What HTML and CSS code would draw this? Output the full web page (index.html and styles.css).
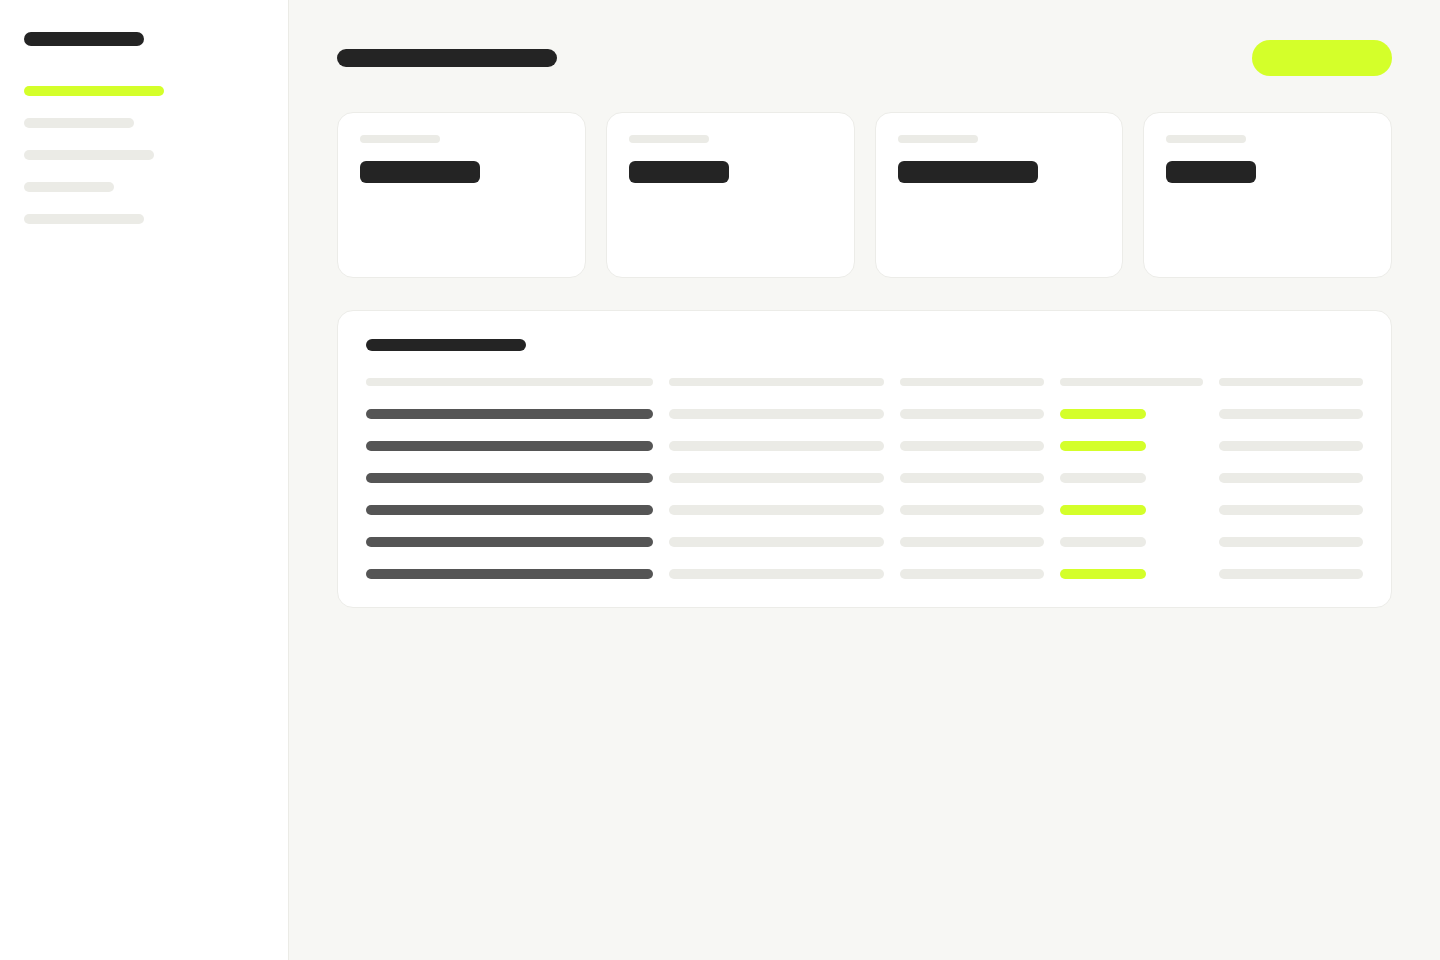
FILE: index.html
```html
<!DOCTYPE html>
<html lang="en">
<head>
<meta charset="utf-8">
<title>Dashboard</title>
<link rel="stylesheet" href="styles.css">
</head>
<body>
<div class="app">
  <aside class="sidebar">
    <div class="logo sk"></div>
    <nav class="nav">
      <div class="nav-item sk active" style="width:140px"></div>
      <div class="nav-item sk" style="width:110px"></div>
      <div class="nav-item sk" style="width:130px"></div>
      <div class="nav-item sk" style="width:90px"></div>
      <div class="nav-item sk" style="width:120px"></div>
    </nav>
  </aside>
  <main class="main">
    <header class="header">
      <div class="page-title sk"></div>
      <div class="btn"></div>
    </header>
    <section class="stats">
      <div class="card">
        <div class="card-label sk"></div>
        <div class="card-value" style="width:120px"></div>
      </div>
      <div class="card">
        <div class="card-label sk"></div>
        <div class="card-value" style="width:100px"></div>
      </div>
      <div class="card">
        <div class="card-label sk"></div>
        <div class="card-value" style="width:140px"></div>
      </div>
      <div class="card">
        <div class="card-label sk"></div>
        <div class="card-value" style="width:90px"></div>
      </div>
    </section>
    <section class="table-card">
      <div class="table-title sk"></div>
      <div class="table">
        <div class="row head">
          <div class="cell sk"></div><div class="cell sk"></div><div class="cell sk"></div><div class="cell sk"></div><div class="cell sk"></div>
        </div>
        <div class="row">
          <div class="cell sk strong"></div><div class="cell sk"></div><div class="cell sk"></div><div class="cell sk status on"></div><div class="cell sk"></div>
        </div>
        <div class="row">
          <div class="cell sk strong"></div><div class="cell sk"></div><div class="cell sk"></div><div class="cell sk status on"></div><div class="cell sk"></div>
        </div>
        <div class="row">
          <div class="cell sk strong"></div><div class="cell sk"></div><div class="cell sk"></div><div class="cell sk status"></div><div class="cell sk"></div>
        </div>
        <div class="row">
          <div class="cell sk strong"></div><div class="cell sk"></div><div class="cell sk"></div><div class="cell sk status on"></div><div class="cell sk"></div>
        </div>
        <div class="row">
          <div class="cell sk strong"></div><div class="cell sk"></div><div class="cell sk"></div><div class="cell sk status"></div><div class="cell sk"></div>
        </div>
        <div class="row">
          <div class="cell sk strong"></div><div class="cell sk"></div><div class="cell sk"></div><div class="cell sk status on"></div><div class="cell sk"></div>
        </div>
      </div>
    </section>
  </main>
</div>
</body>
</html>
```
FILE: styles.css
```css
* { box-sizing: border-box; }
html, body { margin: 0; padding: 0; height: 100%; }
body {
  font-family: "Inter", "Liberation Sans", sans-serif;
  background: #f7f7f4;
}
.app {
  display: flex;
  min-height: 960px;
}
.sk {
  background: #ebebe6;
  border-radius: 999px;
}
.sidebar {
  width: 289px;
  flex: 0 0 289px;
  background: #ffffff;
  border-right: 1px solid #ebebe6;
  padding: 32px 24px;
}
.logo {
  width: 120px;
  height: 14px;
  background: #242424;
}
.nav {
  margin-top: 40px;
  display: flex;
  flex-direction: column;
  gap: 22px;
}
.nav-item { height: 10px; }
.nav-item.active { background: #d4ff2a; }

.main {
  flex: 1;
  padding: 40px 48px;
}
.header {
  display: flex;
  align-items: center;
  justify-content: space-between;
  height: 36px;
  margin-bottom: 36px;
}
.page-title {
  width: 220px;
  height: 18px;
  background: #242424;
}
.btn {
  width: 140px;
  height: 36px;
  border-radius: 999px;
  background: #d4ff2a;
}
.stats {
  display: grid;
  grid-template-columns: repeat(4, 1fr);
  gap: 20px;
  margin-bottom: 32px;
}
.card {
  height: 166px;
  background: #ffffff;
  border: 1px solid #ecece8;
  border-radius: 16px;
  padding: 22px;
}
.card-label {
  width: 80px;
  height: 8px;
}
.card-value {
  margin-top: 18px;
  height: 22px;
  background: #242424;
  border-radius: 6px;
}
.table-card {
  background: #ffffff;
  border: 1px solid #ecece8;
  border-radius: 16px;
  padding: 28px;
}
.table-title {
  width: 160px;
  height: 12px;
  background: #242424;
}
.table {
  margin-top: 26px;
  display: flex;
  flex-direction: column;
  gap: 22px;
}
.row {
  display: grid;
  grid-template-columns: 2fr 1.5fr 1fr 1fr 1fr;
  column-gap: 16px;
  align-items: center;
  height: 10px;
}
.row .cell { height: 10px; }
.row.head .cell { height: 8px; }
.cell.strong { background: #555555; }
.cell.status { width: 60%; }
.cell.status.on { background: #d4ff2a; }
```
